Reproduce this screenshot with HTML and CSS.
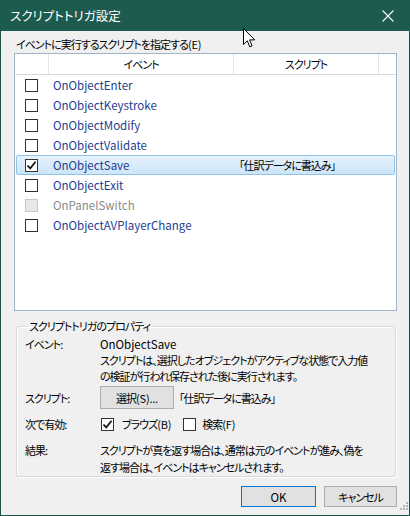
FILE: index.html
```html
<!DOCTYPE html>
<html lang="ja">
<head>
<meta charset="utf-8">
<title>スクリプトトリガ設定</title>
<link rel="stylesheet" href="styles.css">
</head>
<body>
<div class="window">
  <div class="titlebar">
    <span class="title">スクリプトトリガ設定</span>
    <svg class="close" width="12" height="12" viewBox="0 0 12 12"><path d="M0.5 0.5L11.5 11.5M11.5 0.5L0.5 11.5" stroke="#fff" stroke-width="1.1" fill="none"/></svg>
  </div>
  <div class="content">
    <div class="caption">イベントに実行するスクリプトを指定する<span class="pl">(E)</span></div>
    <div class="list">
      <div class="lhead">
        <div class="hc"></div>
        <div class="hc">イベント</div>
        <div class="hc">スクリプト</div>
        <div class="hc last"></div>
      </div>
      <div class="row"><span class="cbcell"><span class="cb"></span></span><span class="ev">OnObjectEnter</span><span class="sc"></span></div>
      <div class="row"><span class="cbcell"><span class="cb"></span></span><span class="ev">OnObjectKeystroke</span><span class="sc"></span></div>
      <div class="row"><span class="cbcell"><span class="cb"></span></span><span class="ev">OnObjectModify</span><span class="sc"></span></div>
      <div class="row"><span class="cbcell"><span class="cb"></span></span><span class="ev">OnObjectValidate</span><span class="sc"></span></div>
      <div class="row selected"><span class="cbcell"><span class="cb checked"><svg width="11" height="11" viewBox="0 0 11 11"><path d="M1.5 5.5L4.2 8.4L9.6 1.8" stroke="#111" stroke-width="1.7" fill="none"/></svg></span></span><span class="ev">OnObjectSave</span><span class="sc">「仕訳データに書込み」</span></div>
      <div class="row"><span class="cbcell"><span class="cb"></span></span><span class="ev">OnObjectExit</span><span class="sc"></span></div>
      <div class="row disabled"><span class="cbcell"><span class="cb"></span></span><span class="ev">OnPanelSwitch</span><span class="sc"></span></div>
      <div class="row"><span class="cbcell"><span class="cb"></span></span><span class="ev">OnObjectAVPlayerChange</span><span class="sc"></span></div>
    </div>
    <fieldset class="group">
      <legend>スクリプトトリガのプロパティ</legend>
      <div class="prop p1">
        <div class="lbl">イベント:</div>
        <div class="val"><span class="latin">OnObjectSave</span><br>スクリプトは、選択したオブジェクトがアクティブな状態で入力値<br>の検証が行われ保存された後に実行されます。</div>
      </div>
      <div class="prop p2">
        <div class="lbl">スクリプト:</div>
        <div class="val inline"><button class="btn sel">選択<span class="pl">(S)...</span></button><span class="scname">「仕訳データに書込み」</span></div>
      </div>
      <div class="prop p3">
        <div class="lbl">次で有効:</div>
        <div class="val inline">
          <span class="cb small checked"><svg width="11" height="11" viewBox="0 0 11 11"><path d="M1.5 5.5L4.2 8.4L9.6 1.8" stroke="#111" stroke-width="1.7" fill="none"/></svg></span><span class="opt">ブラウズ<span class="pl">(B)</span></span>
          <span class="cb small gap"></span><span class="opt">検索<span class="pl">(F)</span></span>
        </div>
      </div>
      <div class="prop p4">
        <div class="lbl">結果:</div>
        <div class="val tall">スクリプトが真を返す場合は、通常は元のイベントが進み、偽を<br>返す場合は、イベントはキャンセルされます。</div>
      </div>
    </fieldset>
    <div class="buttons">
      <button class="btn ok">OK</button>
      <button class="btn cancel">キャンセル</button>
    </div>
  </div>
  <svg class="grip" width="10" height="10" viewBox="0 0 10 10" fill="#b4b4b4">
    <rect x="8" y="0" width="2" height="2"/>
    <rect x="5" y="3" width="2" height="2"/><rect x="8" y="3" width="2" height="2"/>
    <rect x="2" y="6" width="2" height="2"/><rect x="5" y="6" width="2" height="2"/><rect x="8" y="6" width="2" height="2"/>
  </svg>
</div>
<svg class="cursor" width="13" height="20" viewBox="0 0 13 20"><path d="M0.5 0.5L0.5 16.5L4.3 12.8L6.8 18.8L9.1 17.8L6.6 11.9L11.8 11.9Z" fill="#fff" stroke="#000" stroke-width="1"/></svg>
</body>
</html>
```
FILE: styles.css
```css
* { box-sizing: border-box; }
html, body { margin: 0; padding: 0; }
body {
  width: 410px;
  height: 516px;
  font-family: "Noto Sans CJK JP", "Noto Sans", sans-serif;
  font-feature-settings: "palt";
  font-size: 11px;
  letter-spacing: -1px;
  color: #000;
  position: relative;
  overflow: hidden;
  background: #f0f0f0;
}
.window {
  width: 410px;
  height: 516px;
  border: 1px solid #1d4f45;
  border-top: none;
  background: #f0f0f0;
  position: relative;
  display: flex;
  flex-direction: column;
}
.titlebar {
  height: 31px;
  margin: 0 -1px;
  background: #1d5b4f;
  color: #fff;
  display: flex;
  align-items: center;
  justify-content: space-between;
  padding: 0 16px 0 10px;
  flex: none;
}
.title { font-size: 12.5px; letter-spacing: 0; }
.close { display: block; }
.content {
  padding: 5px 12px 0 13px;
  flex: 1;
  display: flex;
  flex-direction: column;
  white-space: nowrap;
}
.pl { letter-spacing: -0.2px; }
.caption { line-height: 16px; height: 16px; padding-left: 2px; }
.list {
  margin-top: 1px;
  height: 258px;
  width: 383px;
  border: 1px solid #9fb4c6;
  background: #fff;
  padding-left: 1px;
}
.lhead {
  display: grid;
  grid-template-columns: 33px 185px 145px 17px;
  height: 21px;
  border-bottom: 1px solid #d8d8d8;
}
.hc {
  border-right: 1px solid #e5e5e5;
  text-align: center;
  line-height: 20px;
}
.hc.last { border-right: none; }
.row {
  display: grid;
  grid-template-columns: 33px 185px 145px;
  height: 20px;
  align-items: center;
  border: 1px solid transparent;
  margin-right: 1px;
}
.row .cbcell { display: flex; padding-left: 8px; }
.row .ev { padding-left: 3px; color: #1e3d8f; line-height: 18px; font-size: 11.5px; letter-spacing: 0; }
.row .sc { padding-left: 4px; line-height: 18px; }
.row.selected {
  background: linear-gradient(#e6f2fc, #cde5f7);
  border-color: #8fc3e8;
  border-radius: 2px;
}
.row.disabled .ev { color: #8a8a8a; }
.row.disabled .cb { background: #e8e8e8; border-color: #c8c8c8; }
.cb {
  width: 13px;
  height: 13px;
  border: 1px solid #333;
  background: #fff;
  display: inline-flex;
  align-items: center;
  justify-content: center;
  flex: none;
}
.cb svg { display: block; }
.group {
  margin: 7px 0 0 2px;
  width: 380px;
  border: 1px solid #d9d9d9;
  border-radius: 3px;
  box-shadow: inset 1px 1px 0 #fff, 1px 1px 0 #fff;
  padding: 0 0 1px 8px;
  min-width: 0;
}
.group legend {
  padding: 0 2px;
  margin-left: 2px;
  line-height: 16px;
}
.prop {
  display: grid;
  grid-template-columns: 75px 1fr;
  line-height: 16px;
}
.latin { font-size: 11.5px; letter-spacing: 0; }
.p1 { margin-top: 2px; }
.p2 { margin-top: 2px; align-items: center; }
.p3 { margin-top: 7px; align-items: center; }
.p4 { margin-top: 10px; }
.p4 .val { line-height: 16.5px; }
.inline { display: flex; align-items: center; }
.btn {
  font: inherit;
  font-feature-settings: "palt";
  letter-spacing: -1px;
  color: #000;
  background: #e1e1e1;
  border: 1px solid #adadad;
  padding: 0;
  margin: 0;
}
.btn.sel { width: 74px; height: 23px; }
.scname { margin-left: 5px; }
.cb.small { margin-left: 1px; }
.opt { margin-left: 8px; }
.cb.gap { margin-left: 12px; }
.opt + .cb.gap + .opt { margin-left: 6px; }
.buttons {
  margin-top: 9px;
  display: flex;
  justify-content: flex-end;
  gap: 8px;
}
.btn.ok { width: 75px; height: 21px; border: 1px solid #0078d7; letter-spacing: 0; font-size: 11.5px; }
.btn.cancel { width: 73px; height: 21px; }
.grip { position: absolute; right: 1px; bottom: 3px; }
.cursor { position: absolute; left: 243px; top: 28px; }
```
